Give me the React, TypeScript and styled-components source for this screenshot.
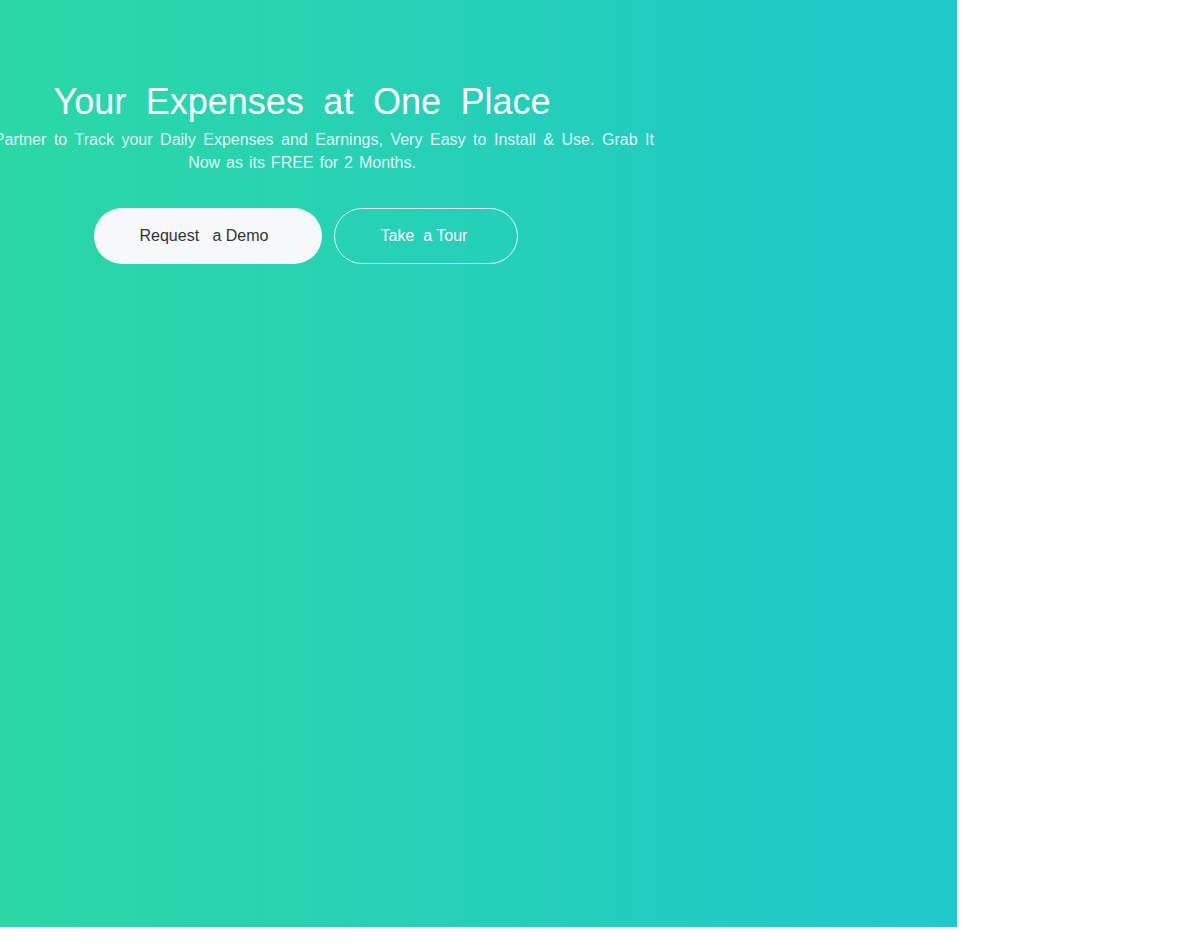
import React from "react";
import styled, { createGlobalStyle } from "styled-components";

const Global = createGlobalStyle`
  html, body { margin: 0; padding: 0; background: #ffffff; }
  body { font-family: "Liberation Sans", Arial, sans-serif; overflow: hidden; }
  * { box-sizing: border-box; }
`;

const Hero = styled.section`
  width: 957px;
  height: 927px;
  background: linear-gradient(to right, #2bd8a5 0%, #1fc8cc 100%);
  padding-top: 80px;
  overflow: hidden;
`;

const Column = styled.div`
  width: 604px;
  display: flex;
  flex-direction: column;
  align-items: center;
`;

const Title = styled.h1`
  margin: 0;
  font-family: "Liberation Sans", Arial, sans-serif;
  font-weight: 400;
  font-size: 36px;
  line-height: 43px;
  color: #ffffff;
  text-align: center;
  word-spacing: 9.5px;
  white-space: nowrap;
`;

const Lead = styled.p`
  margin: 5px -50px 0;
  width: 704px;
  font-size: 16px;
  line-height: 23px;
  color: rgba(255, 255, 255, 0.88);
  text-align: justify;
  text-align-last: center;
  word-spacing: 1.5px;
`;

const LeadIntro = styled.span`
  margin-right: 4px;
`;

const Actions = styled.div`
  display: flex;
  gap: 12px;
  margin-top: 34px;
  padding-left: 8px;
`;

const Pill = styled.button<{ $solid?: boolean; $w: number }>`
  width: ${(p) => p.$w}px;
  height: 56px;
  border-radius: 28px;
  font-family: "Liberation Sans", Arial, sans-serif;
  font-size: 16px;
  white-space: pre;
  cursor: pointer;
  display: flex;
  align-items: center;
  justify-content: center;
  background: ${(p) => (p.$solid ? "#f6f8fa" : "transparent")};
  color: ${(p) => (p.$solid ? "#333333" : "#ffffff")};
  border: ${(p) => (p.$solid ? "none" : "1px solid rgba(255,255,255,0.9)")};
  padding: 0 ${(p) => (p.$solid ? "8px" : "4px")} 0 0;
`;

export default function App() {
  return (
    <>
      <Global />
      <Hero>
        <Column>
          <Title>Your Expenses at One Place</Title>
          <Lead>
            <LeadIntro>Your</LeadIntro> Partner to Track your Daily Expenses and
            Earnings, Very Easy to Install &amp; Use. Grab It Now as its FREE for 2
            Months.
          </Lead>
          <Actions>
            <Pill $solid $w={228}>{"Request   a Demo"}</Pill>
            <Pill $w={184}>{"Take  a Tour"}</Pill>
          </Actions>
        </Column>
      </Hero>
    </>
  );
}
